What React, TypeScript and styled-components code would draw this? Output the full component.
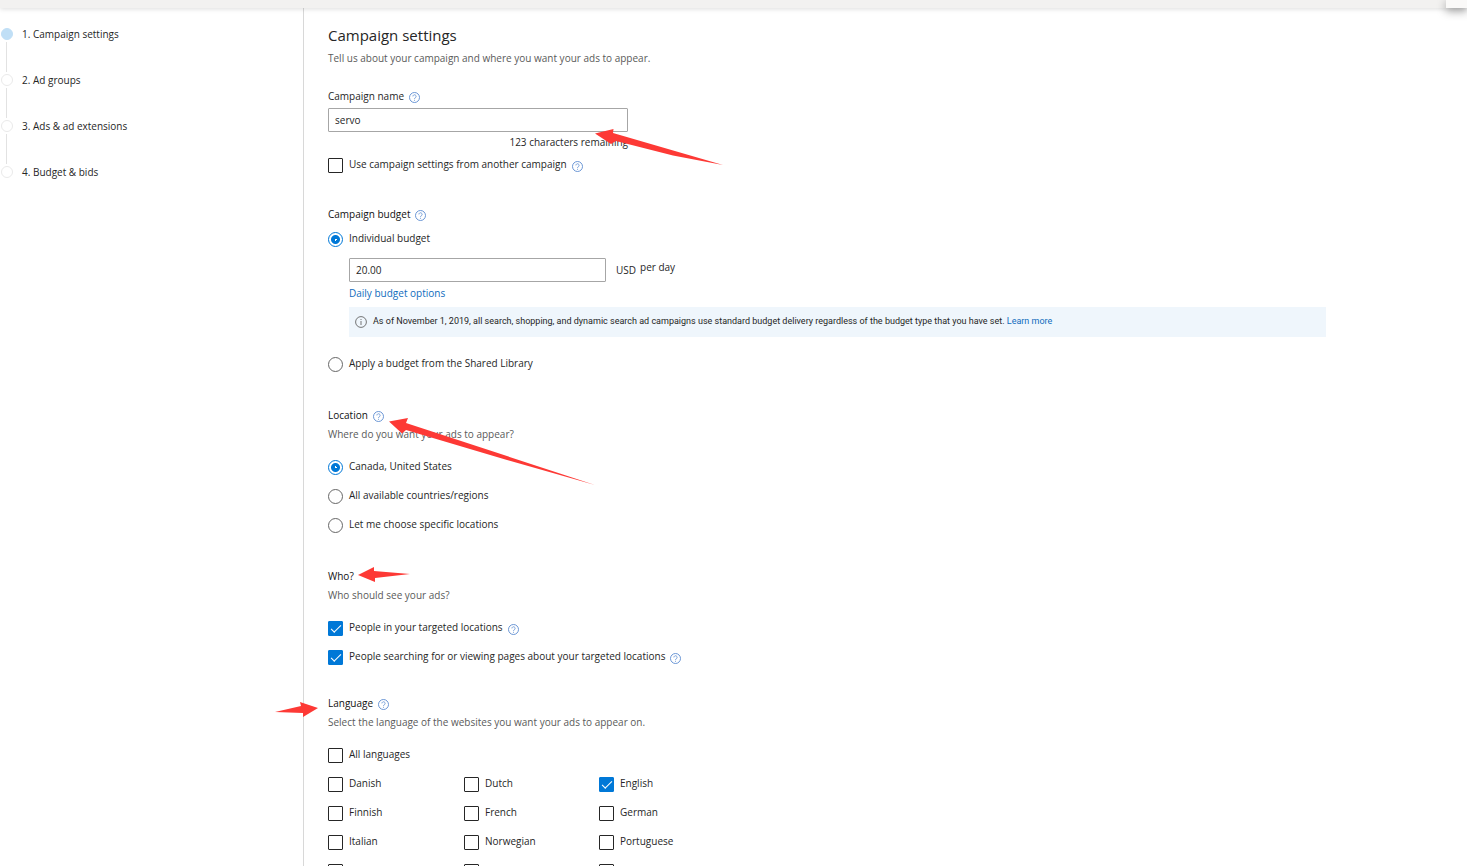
import React, { useState } from "react";
import styled, { createGlobalStyle, css } from "styled-components";

const GlobalStyle = createGlobalStyle`
  *, *::before, *::after { box-sizing: border-box; }
  html { scrollbar-width: none; }
  body {
    margin: 0;
    background: #fff;
    color: #262626;
    font: 10px/16px "Open Sans", "Noto Sans", "Segoe UI", sans-serif;
  }
`;

const Page = styled.div`
  display: flex;
  flex-direction: column;
  min-height: 100vh;
`;

const TopBar = styled.header`
  position: relative;
  z-index: 1;
  display: flex;
  justify-content: flex-end;
  flex: none;
  height: 8px;
  background: #f2f1f0;
  box-shadow: 0 1px 5px rgba(0, 0, 0, 0.14);
`;

const TopPanel = styled.div`
  width: 21px;
  background: #faf9f8;
  box-shadow: 0 3px 10px rgba(0, 0, 0, 0.4);
  clip-path: inset(0 0 -20px -20px);
`;

const Columns = styled.div`
  display: flex;
  flex: 1;
`;

const Sidebar = styled.nav`
  flex: none;
  width: 304px;
  padding: 18px 0 0 1px;
  border-right: 1px solid #d8d8d8;
`;

const Steps = styled.ol`
  margin: 0;
  padding: 0;
  list-style: none;
`;

const Step = styled.li`
  display: flex;
  gap: 9px;
  height: 46px;
`;

const StepTrack = styled.span`
  display: flex;
  flex-direction: column;
  gap: 2px;
  width: 12px;
  padding-top: 2px;
`;

const StepDot = styled.span<{ $current: boolean }>`
  width: 12px;
  height: 12px;
  flex: none;
  border-radius: 50%;
  border: 1px solid ${(p) => (p.$current ? "#c0dff6" : "#eaeaea")};
  background: ${(p) => (p.$current ? "#c0dff6" : "#fff")};
`;

const StepLine = styled.span`
  width: 1px;
  height: 30px;
  margin-left: 5px;
  background: #e2e2e2;
`;

const StepLink = styled.a`
  height: 16px;
  color: inherit;
  text-decoration: none;
`;

const Main = styled.main`
  flex: 1;
  min-width: 0;
  padding: 17px 141px 24px 24px;
`;

const Title = styled.h1`
  margin: 0 0 5px;
  font-size: 15px;
  line-height: 20px;
  font-weight: 400;
`;

const Hint = styled.p`
  margin: 0;
  color: #5a5a5a;
`;

const Section = styled.section<{ $gap: number }>`
  position: relative;
  margin-top: ${(p) => p.$gap}px;
`;

const headingStyle = css`
  display: flex;
  align-items: center;
  gap: 5px;
  margin: 0;
  font-size: 10px;
  line-height: 16px;
  font-weight: 400;
`;

const Heading = styled.h2`
  ${headingStyle}
  color: #111;
`;

const FieldHeading = styled.div`
  ${headingStyle}
`;

const HeadedHint = styled(Hint)`
  margin-top: 3px;
`;

const Options = styled.div<{ $top?: number }>`
  display: flex;
  flex-direction: column;
  margin-top: ${(p) => p.$top ?? 11}px;
`;

const LanguageGrid = styled.div`
  display: grid;
  grid-template-columns: 136px 135px 135px;
`;

const OptionRow = styled.div`
  display: flex;
  align-items: center;
  height: 29px;
`;

const OptionLabel = styled.label`
  padding: 0 5px 4px 6px;
`;

const TextInput = styled.input<{ $width: number }>`
  display: block;
  width: ${(p) => p.$width}px;
  height: 24px;
  padding: 0 6px;
  border: 1px solid #a6a6a6;
  border-radius: 1px;
  background: #fff;
  color: inherit;
  font: inherit;
`;

const CheckInput = styled.input`
  appearance: none;
  display: grid;
  place-items: center;
  flex: none;
  width: 15px;
  height: 15px;
  margin: 0;
  border: 1px solid #262626;
  border-radius: 1px;
  background: #fff;

  &:checked {
    border-color: #0078d7;
    background: #0078d7;
  }

  &:checked::after {
    content: "";
    width: 10px;
    height: 5px;
    margin-bottom: 2px;
    border: solid #fff;
    border-width: 0 0 1px 1px;
    transform: rotate(-45deg);
  }
`;

const RadioInput = styled.input`
  appearance: none;
  flex: none;
  width: 15px;
  height: 15px;
  margin: 0;
  border: 1px solid #666;
  border-radius: 50%;
  background: #fff;

  &:checked {
    border-color: #0078d7;
    background: radial-gradient(circle, #fff 0 1px, #0078d7 1px 4px, #fff 5px);
  }
`;

const HelpButton = styled.button`
  display: flex;
  width: 11px;
  height: 11px;
  margin: 2px 0 0;
  padding: 0;
  border: 0;
  background: none;
  color: #5b8bd0;
`;

const NameField = styled.div`
  width: 300px;
`;

const FieldGap = styled.div`
  padding-top: 4px;
`;

const Counter = styled.p`
  margin: 2px 0 1px;
  text-align: right;
`;

const BudgetDetails = styled.div`
  padding: 4px 0 13px 21px;
`;

const AmountRow = styled.div`
  display: flex;
  gap: 4px;
`;

const Currency = styled.span`
  padding: 4px 0 0 6px;
`;

const Period = styled.span`
  padding-top: 1px;
`;

const Link = styled.a`
  color: #0f6cbd;
  text-decoration: none;
`;

const BudgetLink = styled(Link)`
  display: block;
  width: max-content;
  margin: 3px 0 6px;
`;

const Notice = styled.div`
  display: flex;
  align-items: center;
  gap: 6px;
  min-height: 30px;
  padding: 0 6px;
  background: #eff6fc;
  font-family: Roboto, "Segoe UI", sans-serif;
  font-size: 9px;
`;

const NoticeText = styled.p`
  margin: 0 0 2px;
`;

const Pointer = styled.svg<{ $x: number; $y: number }>`
  position: absolute;
  left: ${(p) => p.$x}px;
  top: ${(p) => p.$y}px;
  overflow: visible;
  pointer-events: none;
  fill: #fd3935;
`;

function Help({ about }: { about: string }) {
  return (
    <HelpButton type="button" aria-label={`Help: ${about}`}>
      <svg width="11" height="11" viewBox="0 0 11 11" fill="none" stroke="currentColor">
        <circle cx="5.5" cy="5.5" r="5" strokeWidth="0.9" />
        <path d="M3.9 4.4a1.6 1.6 0 1 1 2.5 1.3c-.6.4-.9.6-.9 1.3M5.5 7.8v1" strokeWidth="0.8" />
      </svg>
    </HelpButton>
  );
}

function InfoIcon() {
  return (
    <svg width="12" height="12" viewBox="0 0 12 12" fill="none" stroke="#666" aria-hidden="true">
      <circle cx="6" cy="6" r="5.4" strokeWidth="0.9" />
      <path d="M6 5v4M6 3v1" strokeWidth="0.9" />
    </svg>
  );
}

type OptionProps = { id: string; label: string; help?: boolean; checked?: boolean };

function Check({ id, label, help, checked = false }: OptionProps) {
  return (
    <OptionRow>
      <CheckInput type="checkbox" id={id} defaultChecked={checked} />
      <OptionLabel htmlFor={id}>{label}</OptionLabel>
      {help && <Help about={label} />}
    </OptionRow>
  );
}

function Radio({ id, label, name, checked = false }: OptionProps & { name: string }) {
  return (
    <OptionRow>
      <RadioInput type="radio" id={id} name={name} defaultChecked={checked} />
      <OptionLabel htmlFor={id}>{label}</OptionLabel>
    </OptionRow>
  );
}

const steps = ["1. Campaign settings", "2. Ad groups", "3. Ads & ad extensions", "4. Budget & bids"];

const languages = [
  "Danish", "Dutch", "English",
  "Finnish", "French", "German",
  "Italian", "Norwegian", "Portuguese",
  "Spanish", "Swedish", "Traditional Chinese",
];

const NAME_LIMIT = 128;

export default function App() {
  const [name, setName] = useState("servo");

  return (
    <Page>
      <GlobalStyle />
      <TopBar>
        <TopPanel />
      </TopBar>
      <Columns>
        <Sidebar aria-label="Steps">
          <Steps>
            {steps.map((step, i) => (
              <Step key={step}>
                <StepTrack>
                  <StepDot $current={i === 0} />
                  {i < steps.length - 1 && <StepLine />}
                </StepTrack>
                <StepLink href={`#step-${i + 1}`}>{step}</StepLink>
              </Step>
            ))}
          </Steps>
        </Sidebar>
        <Main>
          <Title>Campaign settings</Title>
          <Hint>Tell us about your campaign and where you want your ads to appear.</Hint>

          <Section $gap={22}>
            <FieldHeading>
              <label htmlFor="name">Campaign name</label>
              <Help about="Campaign name" />
            </FieldHeading>
            <NameField>
              <FieldGap>
                <TextInput
                  $width={300}
                  id="name"
                  type="text"
                  maxLength={NAME_LIMIT}
                  value={name}
                  onChange={(e) => setName(e.target.value)}
                />
              </FieldGap>
              <Counter>{NAME_LIMIT - name.length} characters remaining</Counter>
            </NameField>
            <Check id="reuse" label="Use campaign settings from another campaign" help />
            <Pointer $x={267} $y={40} width="128" height="38" aria-hidden="true">
              <path d="M0 5.5 L18.5 1 L18 5 L128 37 L78 27.5 L21 13 L16 16 Z" />
            </Pointer>
          </Section>

          <Section $gap={26}>
            <Heading>
              Campaign budget
              <Help about="Campaign budget" />
            </Heading>
            <Options $top={3}>
              <Radio id="individual" name="budget" label="Individual budget" checked />
              <BudgetDetails>
                <AmountRow>
                  <TextInput $width={257} type="text" defaultValue="20.00" aria-label="Daily budget" />
                  <Currency>USD</Currency>
                  <Period>per day</Period>
                </AmountRow>
                <BudgetLink href="#budget-options">Daily budget options</BudgetLink>
                <Notice>
                  <InfoIcon />
                  <NoticeText>
                    As of November 1, 2019, all search, shopping, and dynamic search ad campaigns use
                    standard budget delivery regardless of the budget type that you have set.{" "}
                    <Link href="#learn-more">Learn more</Link>
                  </NoticeText>
                </Notice>
              </BudgetDetails>
              <Radio id="shared" name="budget" label="Apply a budget from the Shared Library" />
            </Options>
          </Section>

          <Section $gap={28}>
            <Heading>
              Location
              <Help about="Location" />
            </Heading>
            <HeadedHint>Where do you want your ads to appear?</HeadedHint>
            <Options>
              <Radio id="ca-us" name="location" label="Canada, United States" checked />
              <Radio id="all-countries" name="location" label="All available countries/regions" />
              <Radio id="specific" name="location" label="Let me choose specific locations" />
            </Options>
            <Pointer $x={61} $y={11} width="206" height="67" aria-hidden="true">
              <path d="M0 3.5 L19 0 L17 5 L206 67 L118 42 L17 12 L13 15.5 Z" />
            </Pointer>
          </Section>

          <Section $gap={28}>
            <Heading>Who?</Heading>
            <HeadedHint>Who should see your ads?</HeadedHint>
            <Options>
              <Check id="in-location" label="People in your targeted locations" help checked />
              <Check
                id="about-location"
                label="People searching for or viewing pages about your targeted locations"
                help
                checked
              />
            </Options>
            <Pointer $x={30} $y={-1} width="52" height="16" aria-hidden="true">
              <path d="M0 8 L16 0 L16 4 L52 7 L17 11 L17 15 Z" />
            </Pointer>
          </Section>

          <Section $gap={23}>
            <Heading>
              Language
              <Help about="Language" />
            </Heading>
            <HeadedHint>Select the language of the websites you want your ads to appear on.</HeadedHint>
            <Options>
              <Check id="all-languages" label="All languages" />
              <LanguageGrid>
                {languages.map((l) => (
                  <Check key={l} id={l} label={l} checked={l === "English"} />
                ))}
              </LanguageGrid>
            </Options>
            <Pointer $x={-53} $y={7} width="43" height="15" aria-hidden="true">
              <path d="M0 10 L26 4 L25 0 L43 6 L28 15 L28 11 Z" />
            </Pointer>
          </Section>
        </Main>
      </Columns>
    </Page>
  );
}
